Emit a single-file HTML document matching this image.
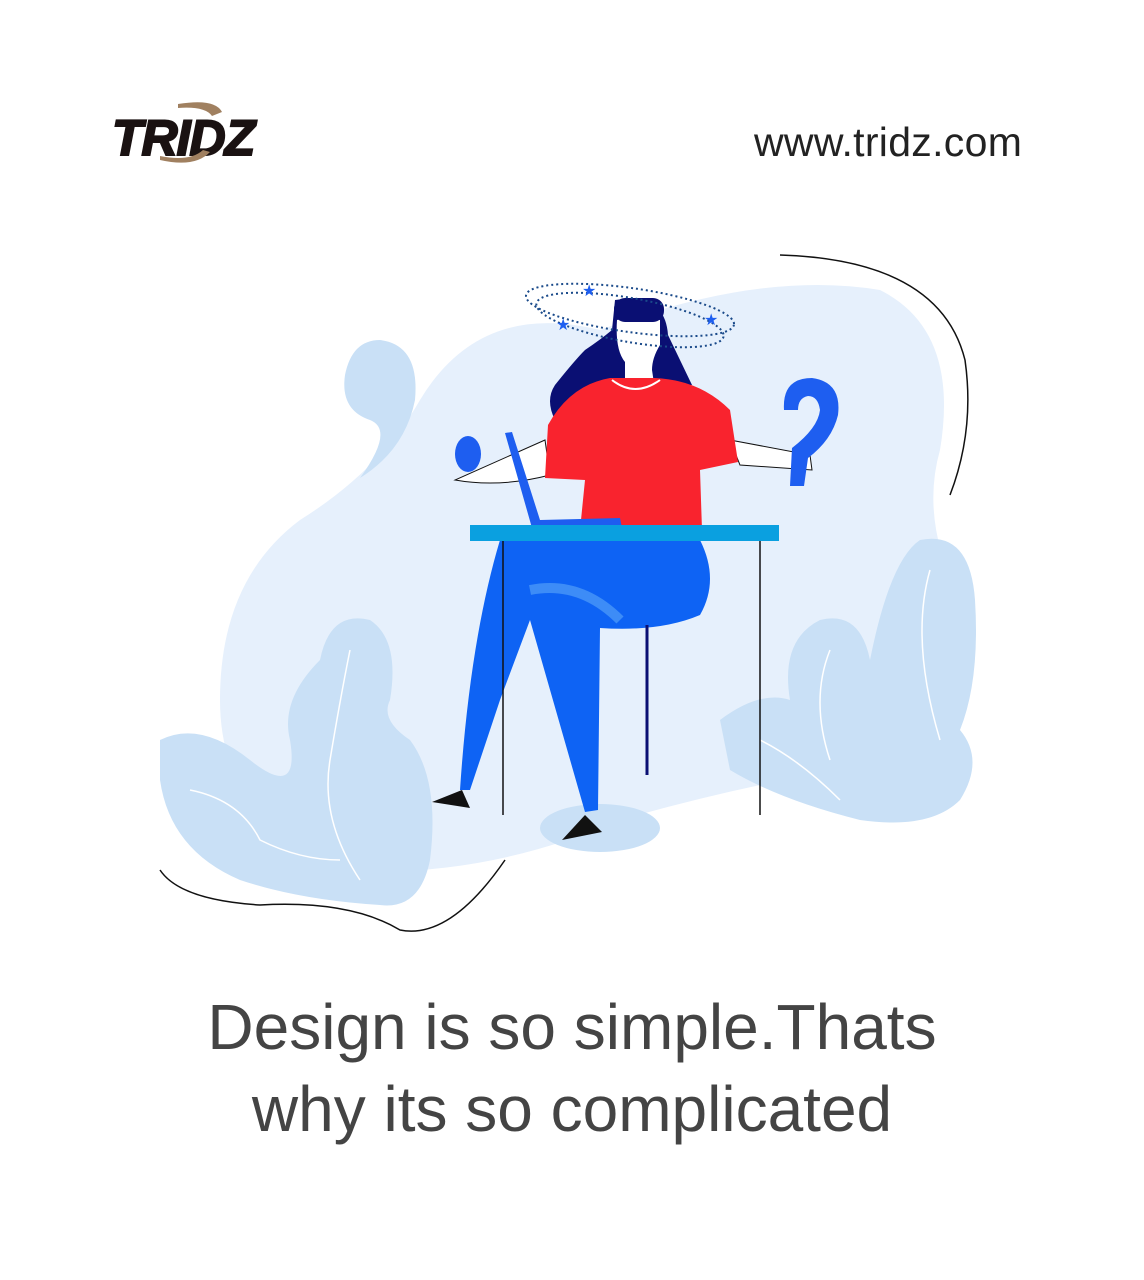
<!DOCTYPE html>
<html><head><meta charset="utf-8"><style>
body{margin:0;width:1144px;height:1280px;background:#fff;position:relative;overflow:hidden;font-family:"Liberation Sans",sans-serif}
.url{position:absolute;left:754px;top:119px;font-size:41px;color:#222;letter-spacing:0.3px}
.cap{position:absolute;left:0;width:1144px;text-align:center;top:986px;font-size:64px;line-height:82px;color:#444}
svg{position:absolute;left:0;top:0}
</style></head><body>
<svg width="1144" height="1280" viewBox="0 0 1144 1280">
<text x="112" y="155" font-family="Liberation Sans" font-weight="bold" font-style="italic" font-size="50" fill="#1a1212" stroke="#1a1212" stroke-width="2" letter-spacing="-1">TRIDZ</text>
<path d="M178 104 Q215 98 222 112 L212 116 Q205 106 178 108Z" fill="#a08060"/>
<path d="M160 160 Q195 168 210 152 L203 150 Q190 162 160 156Z" fill="#a08060"/>
<path d="M420 400 Q480 300 600 330 Q760 270 880 290 Q960 330 940 450 Q920 520 960 600 Q1000 720 900 760 Q760 780 620 820 Q480 880 340 870 Q220 820 220 700 Q220 580 300 520 Q380 470 420 400Z" fill="#e6f0fc"/>
<path d="M380 340 Q420 345 415 400 Q405 450 360 478 Q395 430 370 420 Q340 410 345 375 Q352 340 380 340Z" fill="#c9e0f6"/>
<path d="M160 740 Q200 720 250 760 Q300 800 290 740 Q280 700 320 660 Q330 610 370 620 Q400 640 390 700 Q380 720 410 740 Q440 780 430 860 Q420 910 380 905 Q300 900 240 880 Q170 850 160 780Z" fill="#c9e0f6"/>
<path d="M720 720 Q760 690 790 700 Q780 640 820 620 Q860 610 870 660 Q890 560 920 540 Q970 530 975 600 Q980 680 960 730 Q985 760 960 800 Q930 830 860 820 Q780 800 730 770Z" fill="#c9e0f6"/>
<g fill="none" stroke="#fff" stroke-width="1.5">
<path d="M350 650 Q340 700 330 760 Q320 820 360 880"/><path d="M190 790 Q240 800 260 840 Q300 860 340 860"/>
<path d="M930 570 Q910 640 940 740"/><path d="M760 740 Q800 760 840 800"/><path d="M830 650 Q810 700 830 760"/>
</g>
<path d="M780 255 Q940 260 965 360 Q975 430 950 495" fill="none" stroke="#111" stroke-width="1.5"/>
<path d="M160 870 Q180 900 260 905 Q350 900 400 930 Q450 940 505 860" fill="none" stroke="#111" stroke-width="1.5"/>
<ellipse cx="600" cy="828" rx="60" ry="24" fill="#c9e0f6"/>
<path d="M615 300 Q665 292 668 335 Q680 360 692 385 L630 395 L555 420 Q545 400 555 385 Q575 360 585 350 Q600 340 612 330Z" fill="#0a0f73"/>
<path d="M617 320 Q640 314 660 320 L660 345 Q652 358 652 370 L655 390 L625 392 L625 362 Q615 350 617 320Z" fill="#fff"/>
<rect x="614" y="298" width="50" height="24" rx="11" fill="#0a0f73"/>
<g fill="none" stroke="#1a4a8a" stroke-width="2" stroke-dasharray="2 3">
<ellipse cx="630" cy="310" rx="105" ry="22" transform="rotate(8 630 310)"/>
<ellipse cx="630" cy="320" rx="95" ry="22" transform="rotate(10 630 320)"/>
</g>
<g fill="#1e5ef0" font-size="16"><text x="582" y="296">★</text><text x="556" y="330">★</text><text x="704" y="325">★</text></g>
<path d="M545 440 L455 480 Q500 488 550 475Z" fill="#fff" stroke="#111"/>
<path d="M730 440 L810 455 L812 470 L740 465Z" fill="#fff" stroke="#111"/>
<path d="M610 378 L655 378 Q700 380 730 410 L738 462 L700 470 L702 530 L580 530 L585 480 L545 478 L548 425 Q570 385 610 378Z" fill="#f9232e"/>
<path d="M612 380 Q635 398 660 380" fill="none" stroke="#fff" stroke-width="2"/>
<path d="M784 410 Q782 378 812 378 Q842 382 838 415 Q832 440 808 458 L804 486 L790 486 L792 448 Q818 428 820 410 Q818 396 808 396 Q798 398 798 410Z" fill="#1e5ef0"/>
<ellipse cx="468" cy="454" rx="13" ry="18" fill="#1e5ef0"/>
<path d="M505 433 L512 432 L540 520 L620 518 L622 528 L532 528Z" fill="#1e5ef0"/>
<path d="M500 540 L700 540 Q720 580 700 615 Q660 632 600 628 L598 810 L585 812 L530 620 L500 700 L470 790 L460 790 Q470 640 500 540Z" fill="#0e63f4"/>
<path d="M530 590 Q580 580 620 620" fill="none" stroke="#3d8cf7" stroke-width="10"/>
<rect x="470" y="525" width="309" height="16" fill="#0aa0e0"/>
<line x1="503" y1="541" x2="503" y2="815" stroke="#111" stroke-width="1.5"/>
<line x1="760" y1="541" x2="760" y2="815" stroke="#111" stroke-width="1.5"/>
<line x1="647" y1="625" x2="647" y2="775" stroke="#0a0f73" stroke-width="3"/>
<path d="M462 790 L470 808 L432 802Z" fill="#111"/>
<path d="M585 815 L602 832 L562 840Z" fill="#111"/>
</svg>
<div class="url">www.tridz.com</div>
<div class="cap">Design is so simple.Thats<br>why its so complicated</div>
</body></html>
